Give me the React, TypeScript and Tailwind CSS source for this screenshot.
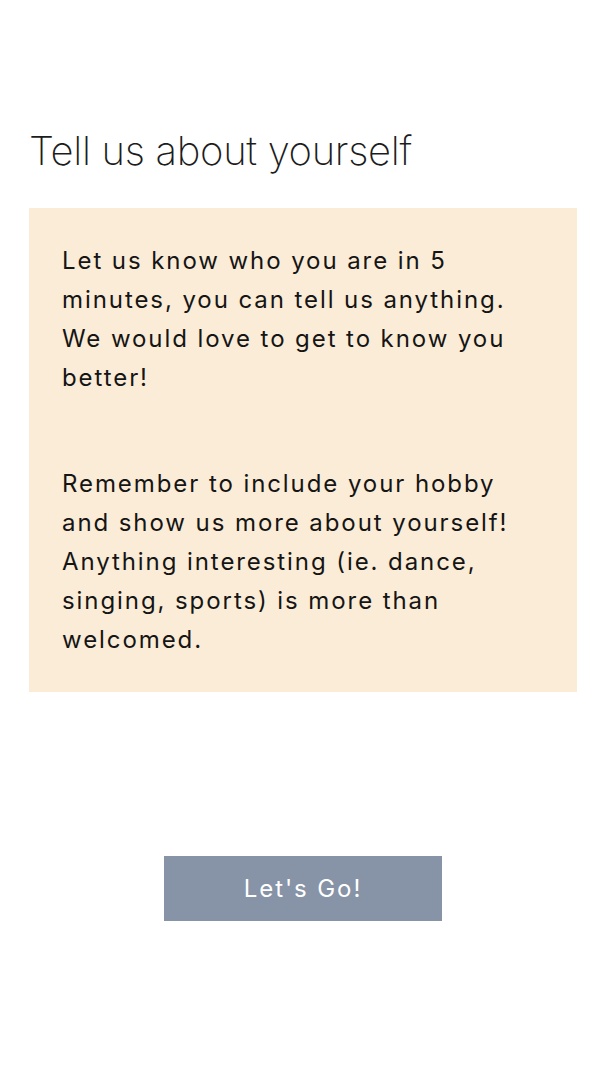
export default function App() {
  return (
    <div className="min-h-[1085px] w-full bg-white font-['Inter',sans-serif]">
      <div className="pl-[29px] pr-[21px] pt-[126px]">
        <h1 className="text-[40px] font-extralight leading-[50px] tracking-[-0.008em] text-[#1c1c1c]">
          Tell us about yourself
        </h1>

        <div className="mt-[32px] bg-[#fbecd7] py-[33px] pl-[33px] pr-[40px] text-[24px] leading-[39px] tracking-[0.08em] text-[#151515]">
          <p>
            Let us know who you are in 5 minutes, you can tell us anything. We
            would love to get to know you better!
          </p>
          <p className="mt-[67px]">
            Remember to include your hobby and show us more about yourself!
            Anything interesting (ie. dance, singing, sports) is more than
            welcomed.
          </p>
        </div>

        <div className="mt-[164px] flex justify-center">
          <button className="h-[65px] w-[278px] bg-[#8793a6] text-[24px] tracking-[0.08em] text-white">
            Let's Go!
          </button>
        </div>
      </div>
    </div>
  );
}
